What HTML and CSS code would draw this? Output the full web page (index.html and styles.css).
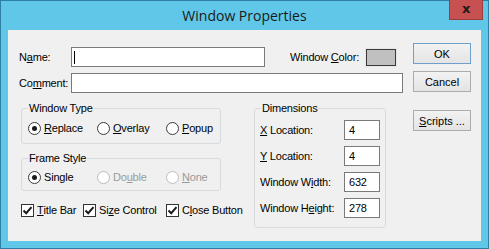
FILE: index.html
```html
<!DOCTYPE html>
<html lang="en">
<head>
    <meta charset="UTF-8">
    <meta name="viewport" content="width=device-width, initial-scale=1.0">
    <title>Window Properties</title>
    <link rel="stylesheet" href="styles.css">
</head>
<body>
    <div class="window">
        <div class="titlebar">
            <span></span>
            <div class="title">Window Properties</div>
            <div class="close">x</div>
        </div>

        <div class="client">
            <div class="main">
                <div class="row">
                    <span class="lbl">N<u>a</u>me:</span>
                    <div class="field field-name"><span class="caret"></span></div>
                    <span class="color-label">Window <u>C</u>olor:</span>
                    <span class="swatch"></span>
                </div>
                <div class="row">
                    <span class="lbl">Co<u>m</u>ment:</span>
                    <div class="field field-comment"></div>
                </div>

                <div class="lower">
                    <div class="left-col">
                        <fieldset class="group group-type">
                            <legend>Window Type</legend>
                            <div class="options">
                                <span class="opt"><span class="radio on"></span><u>R</u>eplace</span>
                                <span class="opt"><span class="radio"></span><u>O</u>verlay</span>
                                <span class="opt"><span class="radio"></span><u>P</u>opup</span>
                            </div>
                        </fieldset>

                        <fieldset class="group group-frame">
                            <legend>Frame Style</legend>
                            <div class="options">
                                <span class="opt"><span class="radio on"></span>Single</span>
                                <span class="opt disabled"><span class="radio"></span>Do<u>u</u>ble</span>
                                <span class="opt disabled"><span class="radio"></span><u>N</u>one</span>
                            </div>
                        </fieldset>

                        <div class="checks">
                            <span class="check check-title"><span class="box"><svg width="11" height="11" viewBox="0 0 11 11"><path d="M1.5 5.5 L4.2 8.2 L9.5 2.2" fill="none" stroke="#1a1a1a" stroke-width="2"/></svg></span><u>T</u>itle Bar</span>
                            <span class="check check-size"><span class="box"><svg width="11" height="11" viewBox="0 0 11 11"><path d="M1.5 5.5 L4.2 8.2 L9.5 2.2" fill="none" stroke="#1a1a1a" stroke-width="2"/></svg></span>Si<u>z</u>e Controls</span>
                            <span class="check"><span class="box"><svg width="11" height="11" viewBox="0 0 11 11"><path d="M1.5 5.5 L4.2 8.2 L9.5 2.2" fill="none" stroke="#1a1a1a" stroke-width="2"/></svg></span>C<u>l</u>ose Button</span>
                        </div>
                    </div>

                    <fieldset class="group dims">
                        <legend>Dimensions</legend>
                        <div class="dim-row"><span class="dim-lbl"><u>X</u> Location:</span><div class="field field-small">4</div></div>
                        <div class="dim-row"><span class="dim-lbl"><u>Y</u> Location:</span><div class="field field-small">4</div></div>
                        <div class="dim-row"><span class="dim-lbl">Window W<u>i</u>dth:</span><div class="field field-small">632</div></div>
                        <div class="dim-row"><span class="dim-lbl">Window H<u>e</u>ight:</span><div class="field field-small">278</div></div>
                    </fieldset>
                </div>
            </div>

            <div class="buttons">
                <button class="btn btn-default">OK</button>
                <button class="btn">Cancel</button>
                <button class="btn btn-scripts"><u>S</u>cripts ...</button>
            </div>
        </div>
    </div>
</body>
</html>
```

FILE: styles.css
```css
body {
    margin: 0;
    font-family: "Liberation Sans", Arial, sans-serif;
    font-size: 11px;
    letter-spacing: -0.2px;
    color: #000;
    background: #fff;
}
.window {
    width: 489px;
    height: 249px;
    box-sizing: border-box;
    border: 1px solid #2f7fa3;
    background: #60c7e8;
    display: flex;
    flex-direction: column;
}
.titlebar {
    height: 29px;
    display: grid;
    grid-template-columns: 1fr auto 1fr;
    padding: 0 5px;
}
.title {
    font-family: "Open Sans", "Noto Sans", sans-serif;
    font-size: 14px;
    letter-spacing: 0;
    line-height: 29px;
    color: #1a1a1a;
}
.close {
    justify-self: end;
    align-self: start;
    width: 34px;
    height: 20px;
    margin-top: -1px;
    box-sizing: border-box;
    background: #c75050;
    border: 1px solid #9e3b3b;
    border-top: none;
    color: #1c1c1c;
    font: bold 13px "DejaVu Sans", sans-serif;
    line-height: 18px;
    text-align: center;
}
.client {
    margin: 0 7px;
    height: 211px;
    box-sizing: border-box;
    background: #f0f0f0;
    display: flex;
    padding-left: 11px;
}
.main {
    width: 384px;
    padding-top: 17px;
}
.row {
    display: flex;
    align-items: center;
    height: 20px;
}
.row + .row {
    margin-top: 6px;
}
.lbl {
    width: 52px;
}
.field {
    height: 20px;
    box-sizing: border-box;
    border: 1px solid #7a7a7a;
    background: #fff;
}
.field-name {
    width: 194px;
    display: flex;
    align-items: center;
}
.field-comment {
    width: 332px;
}
.caret {
    width: 1px;
    height: 13px;
    margin-left: 2px;
    background: #000;
}
.color-label {
    margin-left: auto;
    margin-right: 6px;
}
.swatch {
    width: 32px;
    height: 19px;
    box-sizing: border-box;
    border: 1px solid #e6e6e6;
    background: #c0c0c0;
    box-shadow: inset 0 0 0 1px #3a3a3a;
    margin-right: 6px;
}
.lower {
    display: flex;
    align-items: flex-start;
    margin-top: 9px;
}
.left-col {
    margin-left: 2px;
    width: 200px;
}
.group {
    margin: 0;
    border: 1px solid #d6dbdf;
    border-radius: 3px;
    min-width: 0;
    box-sizing: border-box;
}
.group legend {
    padding: 0 1px;
    line-height: 13px;
}
.group-type {
    padding: 7px 6px 8px;
}
.group-frame {
    margin-top: 8px;
    padding: 6px 6px 6px;
}
.options {
    display: flex;
    height: 13px;
}
.opt {
    flex: none;
    display: flex;
    align-items: center;
    width: 69px;
    line-height: 13px;
}
.radio {
    flex: none;
    width: 13px;
    height: 13px;
    box-sizing: border-box;
    border: 1px solid #3a3a3a;
    border-radius: 50%;
    background: #fff;
    margin-right: 3px;
    display: flex;
    align-items: center;
    justify-content: center;
}
.radio.on::after {
    content: "";
    width: 5px;
    height: 5px;
    border-radius: 50%;
    background: #1a1a1a;
}
.opt.disabled {
    color: #9a9a9a;
}
.opt.disabled .radio {
    border-color: #bcbcbc;
}
.checks {
    display: flex;
    margin-top: 13px;
}
.check {
    flex: none;
    display: flex;
    align-items: center;
    line-height: 13px;
    white-space: nowrap;
}
.check-title {
    width: 62px;
}
.check-size {
    width: 74px;
    overflow: hidden;
    margin-right: 9px;
}
.box {
    flex: none;
    width: 13px;
    height: 13px;
    box-sizing: border-box;
    border: 1px solid #333;
    background: #fff;
    margin-right: 3px;
    display: flex;
    align-items: center;
    justify-content: center;
}
.dims {
    margin-left: 33px;
    width: 132px;
    padding: 5px 5px 9px;
}
.dims legend {
    margin-left: 1px;
}
.dim-row {
    display: flex;
    align-items: center;
}
.dim-row + .dim-row {
    margin-top: 6px;
}
.dim-lbl {
    width: 84px;
}
.field-small {
    width: 36px;
    padding-left: 4px;
    line-height: 18px;
}
.buttons {
    margin-left: 10px;
    width: 58px;
    padding-top: 13px;
    display: flex;
    flex-direction: column;
}
.btn {
    height: 21px;
    box-sizing: border-box;
    border: 1px solid #acacac;
    background: linear-gradient(#f2f2f2, #e4e4e4);
    font: inherit;
    color: #000;
    padding: 0;
}
.btn + .btn {
    margin-top: 7px;
}
.btn-default {
    border-color: #6f9fcc;
}
.btn-scripts {
    margin-top: 18px !important;
}
```
